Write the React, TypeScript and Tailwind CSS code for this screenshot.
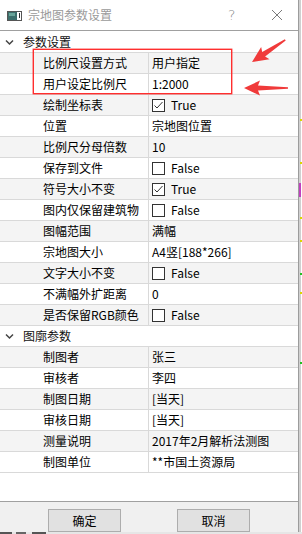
import React from "react";

type Val = string | boolean;
const sec1: [string, Val][] = [
  ["比例尺设置方式", "用户指定"],
  ["用户设定比例尺", "1:2000"],
  ["绘制坐标表", true],
  ["位置", "宗地图位置"],
  ["比例尺分母倍数", "10"],
  ["保存到文件", false],
  ["符号大小不变", true],
  ["图内仅保留建筑物", false],
  ["图幅范围", "满幅"],
  ["宗地图大小", "A4竖[188*266]"],
  ["文字大小不变", false],
  ["不满幅外扩距离", "0"],
  ["是否保留RGB颜色", false],
];
const sec2: [string, Val][] = [
  ["制图者", "张三"],
  ["审核者", "李四"],
  ["制图日期", "[当天]"],
  ["审核日期", "[当天]"],
  ["测量说明", "2017年2月解析法测图"],
  ["制图单位", "**市国土资源局"],
];

function Check({ on }: { on: boolean }) {
  return (
    <div className="flex items-center">
      <div className="w-[13px] h-[13px] border border-[#333333] bg-white flex items-center justify-center">
        {on && (
          <svg width="11" height="11" viewBox="0 0 11 11">
            <polyline points="1.5,5.5 4,8 9.5,2" fill="none" stroke="#333" strokeWidth="1" />
          </svg>
        )}
      </div>
      <span className="ml-[6px]">{on ? "True" : "False"}</span>
    </div>
  );
}

function Row({ name, val, alt }: { name: string; val: Val; alt: boolean }) {
  return (
    <div className={`flex h-[21px] border-b border-[#d9d9d9] ${alt ? "bg-[#f4f4f4]" : "bg-white"}`}>
      <div className="w-[149px] shrink-0 border-r border-[#d9d9d9] pl-[43px] flex items-center whitespace-nowrap">
        {name}
      </div>
      <div className="flex-1 pl-[3px] flex items-center whitespace-nowrap">
        {typeof val === "boolean" ? <Check on={val} /> : <span>{val}</span>}
      </div>
    </div>
  );
}

function Header({ label, h }: { label: string; h: string }) {
  return (
    <div className={`flex items-center ${h} border-b border-[#d9d9d9] bg-white`}>
      <svg width="23" height="20" viewBox="0 0 23 20" className="shrink-0">
        <polyline points="6,8.5 9.5,12 13,8.5" fill="none" stroke="#444" strokeWidth="1.5" />
      </svg>
      <span className="text-[#111]">{label}</span>
    </div>
  );
}

function Arrow({ tx, ty, angle, len }: { tx: number; ty: number; angle: number; len: number }) {
  const pts = `0,0 16,-7.5 14,-2.6 ${len},-0.8 ${len},0.8 14,2.6 16,7.5`;
  return (
    <g transform={`translate(${tx} ${ty}) rotate(${angle})`}>
      <polygon points={pts} fill="#f03a3a" />
    </g>
  );
}

export default function App() {
  return (
    <div
      className="relative w-[302px] h-[534px] bg-white overflow-hidden text-[12px] leading-none text-black"
      style={{ fontFamily: "'Noto Sans CJK SC', 'Noto Sans', sans-serif" }}
    >
      <div className="flex h-[532px]">
        <div className="w-[298px] flex flex-col">
          {/* title bar */}
          <div className="h-[31px] flex items-center bg-white border-b border-[#a0a0a0] relative">
            <svg width="28" height="31" viewBox="0 0 28 31" className="shrink-0">
              <rect x="7.5" y="11.5" width="14" height="9" fill="#ffffff" stroke="#555" />
              <rect x="8" y="12" width="9" height="8" fill="#3d6f6c" />
              <rect x="9" y="13" width="6" height="3" fill="#6aa59a" />
              <rect x="19" y="13" width="1" height="5" fill="#333" />
            </svg>
            <span className="text-[#9a9a9a]">宗地图参数设置</span>
            <span className="absolute left-[228px] top-[8px] text-[14px] text-[#8a8a8a]" style={{ fontFamily: "'DejaVu Sans', sans-serif", fontWeight: 300 }}>?</span>
            <svg className="absolute left-[271px] top-[9px]" width="12" height="12" viewBox="0 0 12 12">
              <line x1="1" y1="1" x2="11" y2="11" stroke="#7a7a7a" strokeWidth="1" />
              <line x1="11" y1="1" x2="1" y2="11" stroke="#7a7a7a" strokeWidth="1" />
            </svg>
          </div>
          {/* grid */}
          <div className="flex-1 flex flex-col bg-white border-b border-[#a0a0a0]">
            <Header label="参数设置" h="h-[22px]" />
            {sec1.map(([n, v], i) => (
              <Row key={n} name={n} val={v} alt={i % 2 === 0} />
            ))}
            <Header label="图廓参数" h="h-[21px]" />
            {sec2.map(([n, v], i) => (
              <Row key={n} name={n} val={v} alt={i % 2 === 0} />
            ))}
          </div>
          {/* buttons */}
          <div className="h-[30px] bg-[#f0f0f0] flex items-start pt-[7px]">
            <div className="ml-[48px] w-[73px] h-[23px] border border-[#adadad] bg-[#e1e1e1] flex items-center justify-center">确定</div>
            <div className="ml-[56px] w-[73px] h-[23px] border border-[#adadad] bg-[#e1e1e1] flex items-center justify-center">取消</div>
          </div>
        </div>
        <div className="w-px bg-[#9c9c9c]" />
        <div className="w-[2px] bg-[#d0d0d0]" />
        <div className="w-px bg-white" />
      </div>
      <div className="h-[2px] flex bg-[#e6e6e6]">
        <div className="w-[12px] bg-[#555]" />
        <div className="w-[4px]" />
        <div className="w-[10px] bg-[#666]" />
        <div className="w-[6px]" />
        <div className="w-[14px] bg-[#555]" />
      </div>

      {/* background bits at right edge */}
      <div className="absolute left-[300px] top-[119px] w-[2px] h-[2px] bg-[#d8d800]" />
      <div className="absolute left-[300px] top-[162px] w-[2px] h-[2px] bg-[#d8d800]" />
      <div className="absolute left-[299px] top-[183px] w-[2px] h-[14px] bg-[#c040c0]" />
      <div className="absolute left-[300px] top-[217px] w-[2px] h-[2px] bg-[#d8d800]" />
      <div className="absolute left-[300px] top-[240px] w-[2px] h-[2px] bg-[#d8d800]" />
      <div className="absolute left-[300px] top-[273px] w-[2px] h-[2px] bg-[#20c020]" />
      <div className="absolute left-[300px] top-[292px] w-[2px] h-[2px] bg-[#d8d800]" />
      <div className="absolute left-[300px] top-[362px] w-[2px] h-[2px] bg-[#20c020]" />

      {/* annotation overlay */}
      <svg className="absolute left-0 top-0 pointer-events-none" width="302" height="534" viewBox="0 0 302 534">
        <rect x="33.3" y="49.3" width="198.4" height="44.4" fill="none" stroke="#ff2e2e" strokeWidth="1.4" />
        <Arrow tx={252} ty={62} angle={-33.7} len={40} />
        <Arrow tx={244} ty={88} angle={0} len={44} />
      </svg>
    </div>
  );
}
